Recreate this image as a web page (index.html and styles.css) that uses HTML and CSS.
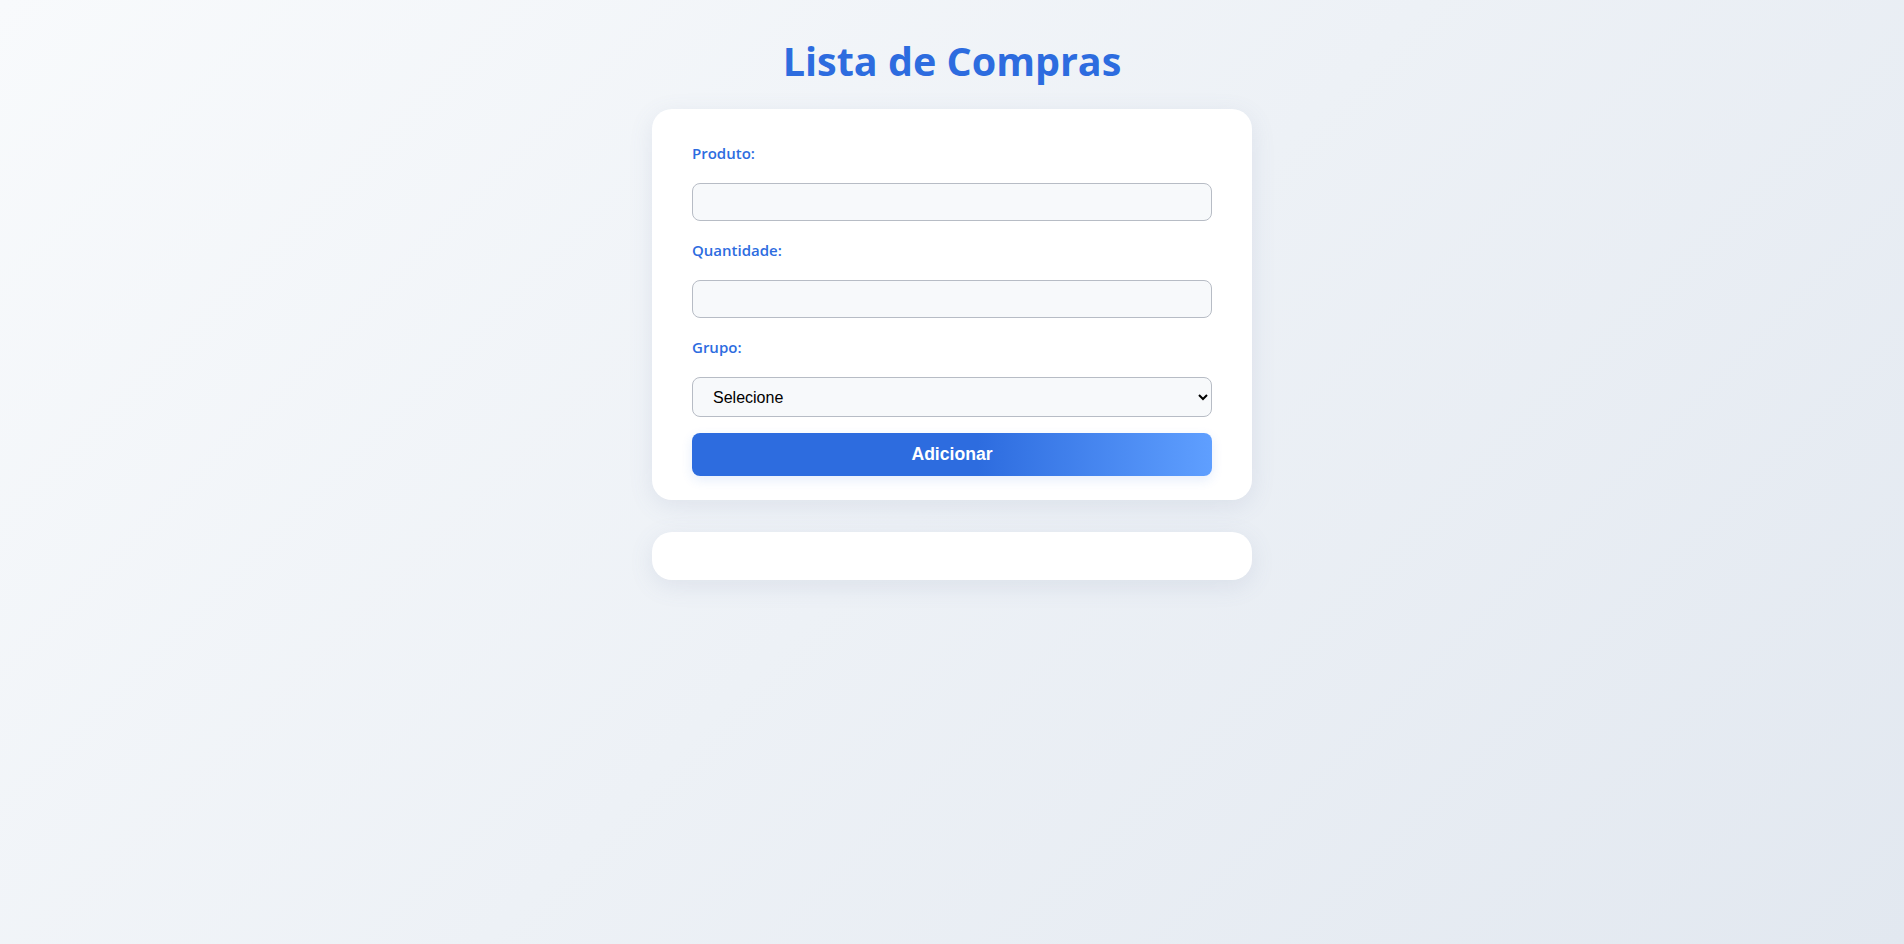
FILE: index.html
```html
<!DOCTYPE html>
<html lang="pt-BR">
<head>
<meta charset="utf-8">
<title>Lista de Compras</title>
<link rel="stylesheet" href="styles.css">
</head>
<body>
<main class="page">
  <h1 class="title">Lista de Compras</h1>
  <form class="card form-card">
    <label class="field-label" for="produto">Produto:</label>
    <input class="field-input" id="produto" type="text">
    <label class="field-label" for="quantidade">Quantidade:</label>
    <input class="field-input" id="quantidade" type="number">
    <label class="field-label" for="grupo">Grupo:</label>
    <select class="field-select" id="grupo">
      <option>Selecione</option>
    </select>
    <button class="add-button" type="button">Adicionar</button>
  </form>
  <section class="card list-card"></section>
</main>
</body>
</html>
```
FILE: styles.css
```css
* { box-sizing: border-box; }
html, body { height: 100%; }
body {
  margin: 0;
  min-height: 100vh;
  background: linear-gradient(135deg, #f8fafc 0%, #e2e8f0 100%);
  font-family: "Open Sans", "Noto Sans", sans-serif;
}
.page {
  display: flex;
  flex-direction: column;
  align-items: center;
  padding-top: 34px;
}
.title {
  margin: 0 0 20px;
  font-size: 39.5px;
  line-height: 55px;
  font-weight: 700;
  color: #2d6cdf;
}
.card {
  width: 600px;
  background: #ffffff;
  border-radius: 20px;
  box-shadow: 0 6px 24px rgba(100, 116, 160, 0.12);
}
.form-card {
  display: flex;
  flex-direction: column;
  padding: 24px 40px;
}
.field-label {
  display: block;
  margin: 10px 0 20px;
  font-size: 15px;
  line-height: 20px;
  font-weight: 600;
  color: #2d6cdf;
}
.field-input {
  height: 38px;
  margin-bottom: 9px;
  padding: 0 16px;
  border: 1px solid #b7bcc5;
  border-radius: 8px;
  background: #f7f9fb;
  font: 16px "Liberation Sans", Arial, sans-serif;
}
.field-select {
  height: 40px;
  padding: 0 12px 0 16px;
  border: 1px solid #b7bcc5;
  border-radius: 8px;
  background: #f7f9fb;
  font: 16px "Liberation Sans", Arial, sans-serif;
  color: #000;
}
.add-button {
  height: 43px;
  margin-top: 16px;
  border: none;
  border-radius: 8px;
  background: linear-gradient(90deg, #2d6cdf 55%, #5f9fff 100%);
  box-shadow: 0 4px 12px rgba(45, 108, 223, 0.12);
  color: #ffffff;
  font: 700 17.6px "Liberation Sans", Arial, sans-serif;
  cursor: pointer;
}
.list-card {
  margin-top: 32px;
  padding: 24px 40px;
  height: 48px;
}
```
